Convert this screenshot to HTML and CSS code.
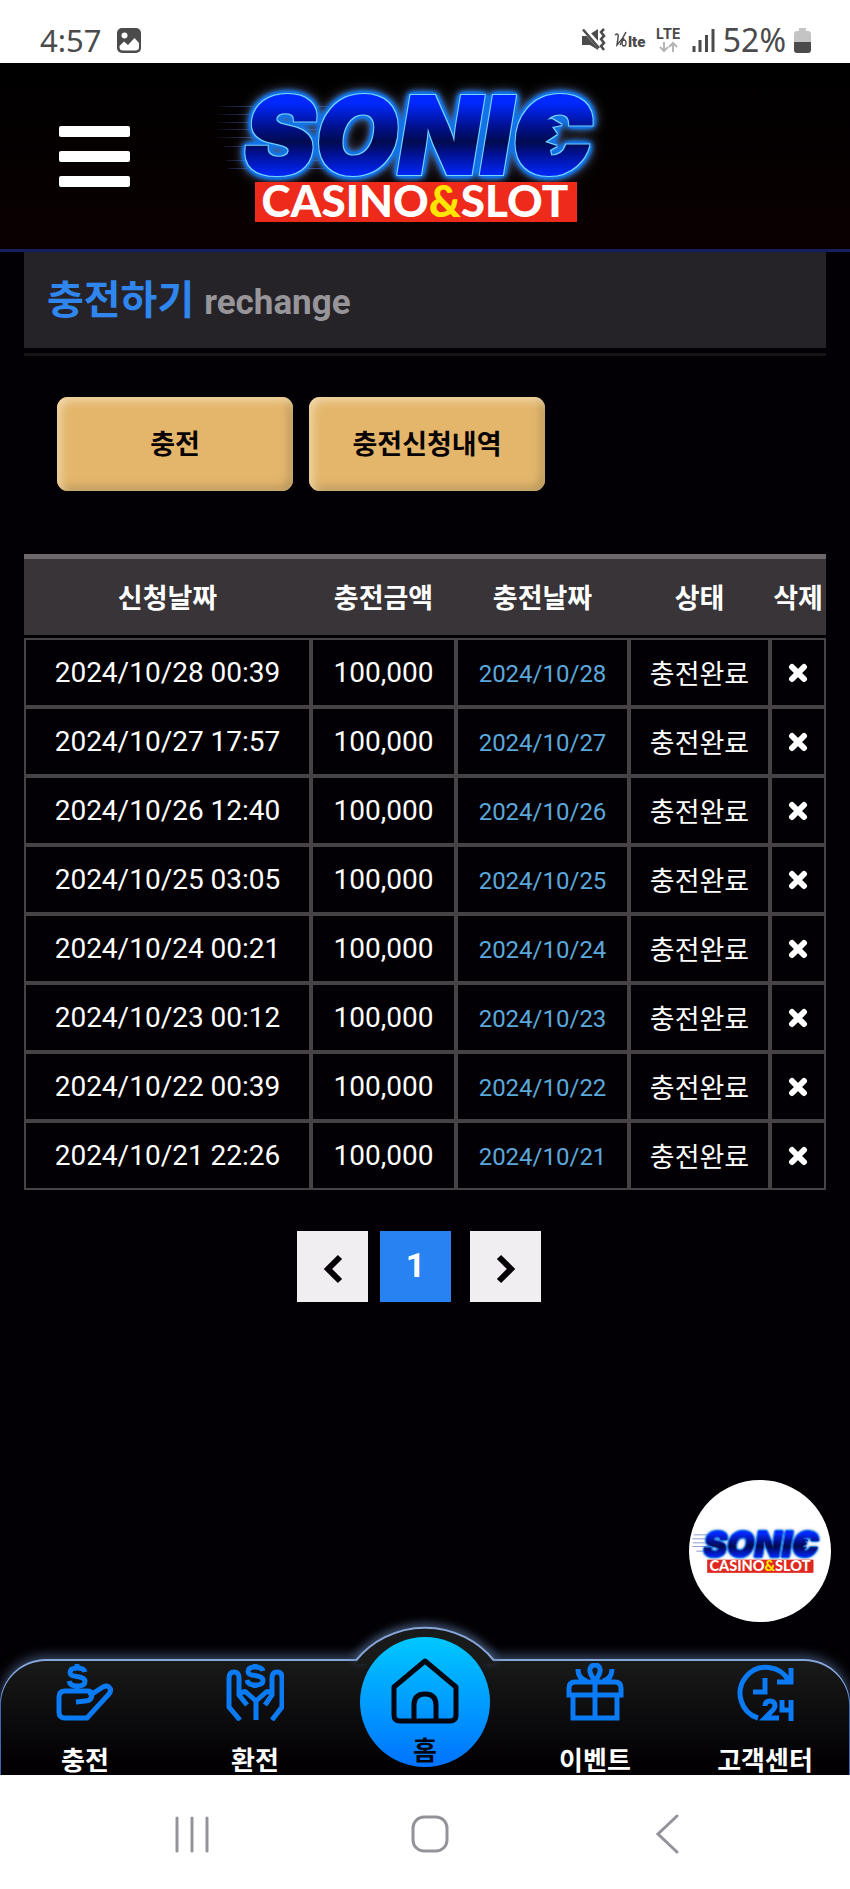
FILE: index.html
```html
<!DOCTYPE html>
<html lang="ko">
<head>
<meta charset="utf-8">
<meta name="viewport" content="width=device-width, initial-scale=1">
<title>충전하기</title>
<link rel="stylesheet" href="styles.css">
</head>
<body>
<div class="status">
  <span class="status-text">4:57</span>
  <svg class="status-photo" width="24" height="25" viewBox="0 0 24 25" aria-hidden="true"><rect width="24" height="25" rx="5" fill="#4b4b4b"/><circle cx="7.500" cy="7.500" r="3" fill="#fff"/><path d="M2.500 18 7 13.500l4 3.500 6.500-7 4.500 5v4q0 3.500-3.500 3.500H6q-3.500 0-3.500-3.500z" fill="#fff"/></svg>
  <div class="status-right">
    <svg width="24" height="24" viewBox="0 0 24 24" aria-hidden="true"><path d="M0 8h5L16 1v21L8 17H0z" fill="#4b4b4b"/><path d="M1 0 18 19" stroke="#fff" stroke-width="5"/><path d="M1 1.500 17 20" stroke="#4b4b4b" stroke-width="2.500"/><path d="M22 1l-3 3 3 4-3 3 3 4-3 3 3 4" fill="none" stroke="#4b4b4b" stroke-width="2.500"/></svg>
    <svg width="34" height="20" viewBox="0 0 34 20" aria-hidden="true"><path d="M1 5q4-3 3 3l-1 7Q9 9 12 2M10 8l-4 7" fill="none" stroke="#4b4b4b" stroke-width="1.500"/><ellipse cx="10" cy="13" rx="2" ry="3" fill="none" stroke="#4b4b4b" stroke-width="1.300"/><text x="14" y="17" class="volte">lte</text></svg>
    <svg width="27" height="30" viewBox="0 0 27 30" aria-hidden="true"><text x="0" y="14" class="lte">LTE</text><path d="M8 17v9M4 22l4 4 4-4M17 27v-9M13 22l4-4 4 4" fill="none" stroke="#b5b5b5" stroke-width="2"/></svg>
    <svg width="24" height="24" viewBox="0 0 24 24" aria-hidden="true"><path d="M3 18v6M9 12v12M15.500 7v17M22 1v23" stroke="#4b4b4b" stroke-width="3"/></svg>
    <span class="status-text status-percent">52%</span>
    <svg width="17" height="25" viewBox="0 0 17 25" aria-hidden="true"><path d="M5 0h7v3h2q3 0 3 3v8H0V6q0-3 3-3h2z" fill="#c4c4c4"/><path d="M0 14h17v8q0 3-3 3H3q-3 0-3-3z" fill="#4b4b4b"/></svg>
  </div>
</div>

<div class="app">
  <header class="header">
    <button class="menu" type="button" aria-label="메뉴"><span></span><span></span><span></span></button>
    <a class="brand" href="#" aria-label="SONIC CASINO&amp;SLOT">
      <svg class="logo" viewBox="0 0 450 170">
        <defs>
          <linearGradient id="ink" gradientUnits="userSpaceOnUse" x1="0" y1="28" x2="0" y2="106"><stop offset="0.05" stop-color="#0028ff"/><stop offset="0.35" stop-color="#001190"/><stop offset="0.55" stop-color="#000a50"/><stop offset="0.7" stop-color="#001190"/><stop offset="0.95" stop-color="#0024f0"/></linearGradient>
          <linearGradient id="trail" x1="0" x2="1"><stop offset="0" stop-color="#4a62b8" stop-opacity="0"/><stop offset="0.5" stop-color="#4a62b8"/><stop offset="1" stop-color="#2b50d0" stop-opacity="0.3"/></linearGradient>
          <filter id="neon" x="-10%" y="-40%" width="120%" height="180%" color-interpolation-filters="sRGB">
            <feMorphology in="SourceAlpha" operator="dilate" radius="1" result="a"/>
            <feFlood flood-color="#74d4ff"/><feComposite in2="a" operator="in" result="edge"/>
            <feGaussianBlur in="a" stdDeviation="3" result="b"/>
            <feComponentTransfer in="b" result="c"><feFuncA type="linear" slope="3"/></feComponentTransfer>
            <feFlood flood-color="#1272e6"/><feComposite in2="c" operator="in" result="rim"/>
            <feGaussianBlur in="a" stdDeviation="7" result="d"/>
            <feFlood flood-color="#8094c8"/><feComposite in2="d" operator="in" result="halo"/>
            <feMerge><feMergeNode in="halo"/><feMergeNode in="rim"/><feMergeNode in="edge"/><feMergeNode in="SourceGraphic"/></feMerge>
          </filter>
        </defs>
        <path fill="url(#trail)" d="M18 35h110v1H18zM14 43h120v1H14zM12 51h120v1H12zM16 58h120v1H16zM14 66h120v1H14zM24 75h120v1H24zM26 89h120v1H26zM28 97h120v1H28z"/>
        <g filter="url(#neon)">
          <path fill="url(#ink)" d="M336 50 352 48 362 54 352 56 357 63 345 71 357 75 350 79 352 88 334 86z"/>
          <text x="44" y="103" class="sonic">SONIC</text>
        </g>
        <rect x="55" y="111" width="322" height="40" fill="#ee2a1b"/>
        <text x="215" y="146" class="tagline">CASINO<tspan class="amp">&amp;</tspan>SLOT</text>
      </svg>
    </a>
  </header>

  <main class="main">
    <h1 class="title">충전하기 <small>rechange</small></h1>
    <div class="actions">
      <button type="button">충전</button>
      <button type="button">충전신청내역</button>
    </div>

    <table class="history">
      <colgroup><col class="c-req"><col class="c-amt"><col class="c-date"><col class="c-state"><col class="c-del"></colgroup>
      <thead><tr><th>신청날짜</th><th>충전금액</th><th>충전날짜</th><th>상태</th><th>삭제</th></tr></thead>
      <tbody>
        <tr><td>2024/10/28 00:39</td><td>100,000</td><td class="date">2024/10/28</td><td class="state">충전완료</td><td><button type="button" class="del" aria-label="삭제"><svg viewBox="0 0 20 20"><path d="M4 4l12 12M16 4 4 16"/></svg></button></td></tr>
        <tr><td>2024/10/27 17:57</td><td>100,000</td><td class="date">2024/10/27</td><td class="state">충전완료</td><td><button type="button" class="del" aria-label="삭제"><svg viewBox="0 0 20 20"><path d="M4 4l12 12M16 4 4 16"/></svg></button></td></tr>
        <tr><td>2024/10/26 12:40</td><td>100,000</td><td class="date">2024/10/26</td><td class="state">충전완료</td><td><button type="button" class="del" aria-label="삭제"><svg viewBox="0 0 20 20"><path d="M4 4l12 12M16 4 4 16"/></svg></button></td></tr>
        <tr><td>2024/10/25 03:05</td><td>100,000</td><td class="date">2024/10/25</td><td class="state">충전완료</td><td><button type="button" class="del" aria-label="삭제"><svg viewBox="0 0 20 20"><path d="M4 4l12 12M16 4 4 16"/></svg></button></td></tr>
        <tr><td>2024/10/24 00:21</td><td>100,000</td><td class="date">2024/10/24</td><td class="state">충전완료</td><td><button type="button" class="del" aria-label="삭제"><svg viewBox="0 0 20 20"><path d="M4 4l12 12M16 4 4 16"/></svg></button></td></tr>
        <tr><td>2024/10/23 00:12</td><td>100,000</td><td class="date">2024/10/23</td><td class="state">충전완료</td><td><button type="button" class="del" aria-label="삭제"><svg viewBox="0 0 20 20"><path d="M4 4l12 12M16 4 4 16"/></svg></button></td></tr>
        <tr><td>2024/10/22 00:39</td><td>100,000</td><td class="date">2024/10/22</td><td class="state">충전완료</td><td><button type="button" class="del" aria-label="삭제"><svg viewBox="0 0 20 20"><path d="M4 4l12 12M16 4 4 16"/></svg></button></td></tr>
        <tr><td>2024/10/21 22:26</td><td>100,000</td><td class="date">2024/10/21</td><td class="state">충전완료</td><td><button type="button" class="del" aria-label="삭제"><svg viewBox="0 0 20 20"><path d="M4 4l12 12M16 4 4 16"/></svg></button></td></tr>
      </tbody>
    </table>

    <nav class="pages" aria-label="페이지">
      <a href="#" aria-label="이전"><svg viewBox="0 0 20 30"><path d="M17 3 5 15l12 12"/></svg></a>
      <a href="#" class="current" aria-current="page">1</a>
      <a href="#" aria-label="다음"><svg viewBox="0 0 20 30"><path d="M3 3l12 12L3 27"/></svg></a>
    </nav>
  </main>

  <a class="float" href="#" aria-label="SONIC CASINO&amp;SLOT">
    <svg viewBox="0 0 430 170">
      <path fill="#6d7fc0" d="M14 35h90v2H14zM10 47h90v2H10zM12 59h90v2H12zM10 70h90v2H10zM22 84h60v2H22z"/>
      <g filter="url(#neon)">
        <path fill="url(#ink)" d="M336 50 352 48 362 54 352 56 357 63 345 71 357 75 350 79 352 88 334 86z"/>
        <text x="44" y="103" class="sonic">SONIC</text>
      </g>
      <rect x="55" y="111" width="322" height="40" fill="#e0281e"/>
      <text x="215" y="146" class="tagline">CASINO<tspan class="amp">&amp;</tspan>SLOT</text>
    </svg>
  </a>

  <nav class="tabs" aria-label="메뉴">
    <svg class="bump" viewBox="0 0 170 50" aria-hidden="true">
      <path class="bump-glow" d="M17 42A89 89 0 0 1 153 42"/>
      <path d="M16 46V42A89 89 0 0 1 154 42V46z" fill="#191a1a"/>
      <path class="bump-line" d="M16 42.500A89 89 0 0 1 154 42.500"/>
    </svg>
    <a href="#"><svg class="ico" viewBox="0 0 58 58"><path d="M21 28v-4M9 28h22q5 0 5 3 0 7-7 7l-9 1M33 33l14-9q4-2 6 0 3 3 0 7L31 55H9q-6 0-6-6V34q0-6 6-6"/><path class="coin" d="M29 9Q28 5 21 5 14 5 14 9.500q0 3.500 7 4 8 1 8 5 0 4.500-8 4.500-7 0-8-5M21 1v4"/></svg><span>충전</span></a>
    <a href="#"><svg class="ico" viewBox="0 0 58 58"><path d="M14 57 3 44V15q0-6 5-6t5 6v17l8 10M13 31l4-2q2-1 4 1l9 8V57M30 38l9-8q2-2 4-1l4 2M46 57l10-13V15q0-6-5-6t-5 6v17l-7 10"/><path class="coin" d="M37 8q-1-4-8-4-7 0-7 4.500 0 3.500 7 4 8 1 8 5 0 4.500-8 4.500-7 0-8-5M29 1v3M29 22v3"/></svg><span>환전</span></a>
    <a href="#" class="home"><svg viewBox="0 0 68 66"><path d="M3 29 34 3l31 26v28q0 6-6 6H9q-6 0-6-6zM23 63V47q0-11 11-11t11 11v16"/></svg><span>홈</span></a>
    <a href="#"><svg class="ico" viewBox="0 0 58 58"><path d="M3 32v-7q0-6 6-6h40q6 0 6 6v7zM7 34v21h44V34M29 19v36M29 18q-6-8-5-12 1-4 5-4t5 4q1 4-5 12M12 6q0 10 9 12M46 6q0 10-9 12"/></svg><span>이벤트</span></a>
    <a href="#"><svg class="ico" viewBox="0 0 58 58"><path d="M22 55A26 26 0 1 1 53 18M55 5v14H41M29 15v14H17"/><path d="M29 43q0-5 5-5t5 5q0 2-4 6l-6 6h14M46 37v10h9M55 37v21"/></svg><span>고객센터</span></a>
  </nav>
</div>

<div class="system">
  <button type="button" aria-label="최근 앱"><svg viewBox="0 0 38 40"><path d="M4 4v33M19 4v33M34 4v33"/></svg></button>
  <button type="button" aria-label="홈"><svg viewBox="0 0 38 40"><rect x="2" y="3" width="34" height="34" rx="11"/></svg></button>
  <button type="button" aria-label="뒤로"><svg viewBox="0 0 38 40"><path d="M28 2 9 20l19 18"/></svg></button>
</div>
</body>
</html>
```

FILE: styles.css
```css
* { box-sizing: border-box; }
body {
  margin: 0;
  min-height: 100vh;
  display: flex;
  flex-direction: column;
  background: #fff;
  color: #fff;
  font-family: Roboto, "Noto Sans CJK KR", sans-serif;
}
button { font: inherit; color: inherit; border: 0; padding: 0; background: none; }
a { color: inherit; text-decoration: none; }
svg { display: block; }

/* phone status bar */
.status {
  display: flex;
  align-items: center;
  height: 63px;
  padding: 17px 39px 0 40px;
  color: #4b4b4b;
}
.status-text { font: 31px/40px "Noto Sans", sans-serif; }
.status-percent { font-size: 32px; }
.status-photo { margin-left: 15px; }
.status-right { margin-left: auto; display: flex; align-items: center; gap: 8px; }
.volte { font: 900 15px Roboto, sans-serif; fill: #4b4b4b; }
.lte { font: 700 14px Inter, sans-serif; fill: #4b4b4b; }

.app {
  position: relative;
  flex: 1;
  display: flex;
  flex-direction: column;
  overflow: hidden;
  background: #020004;
}

/* header */
.header {
  display: grid;
  grid-template-columns: 1fr auto 1fr;
  align-items: center;
  height: 189px;
  border-bottom: 3px solid #14205e;
  background: linear-gradient(#000, #0a0001);
}
.menu { display: grid; gap: 14px; width: 71px; margin-left: 59px; }
.menu span { height: 11px; border-radius: 2px; background: #fff; }
.logo { width: 450px; overflow: visible; }
.sonic {
  font: italic 900 107px Inter, sans-serif;
  fill: url(#ink);
  stroke: url(#ink);
  stroke-width: 2px;
}
.tagline {
  font: 900 44px Lato, sans-serif;
  fill: #fff;
  text-anchor: middle;
}
.amp { fill: #ffe600; }

/* content */
.main { flex: 1; padding: 0 24px; }
.title {
  position: relative;
  margin: 0 0 49px;
  padding: 19px 23px 0;
  height: 96px;
  background: #252327;
  color: #2e86ee;
  font-weight: 700;
  font-size: 40px;
  line-height: 60px;
}
.title::after {
  content: "";
  position: absolute;
  left: 0;
  right: 0;
  bottom: -8px;
  height: 3px;
  background: #161417;
}
.title small { color: #98959a; font-size: 35px; font-weight: 700; }
.actions { display: flex; gap: 16px; padding: 0 33px; margin-bottom: 63px; }
.actions button {
  width: 236px;
  height: 94px;
  padding-bottom: 4px;
  border-radius: 11px;
  background: #e3b66c;
  box-shadow: inset 4px 4px 8px #f0d6a8, inset -4px -4px 8px #b8965c;
  color: #080204;
  font-size: 27px;
  font-weight: 700;
}

.history {
  width: 100%;
  table-layout: fixed;
  border-collapse: separate;
  border-spacing: 0;
  text-align: center;
  font-size: 28px;
}
.c-req { width: 287px; }
.c-amt { width: 145px; }
.c-date { width: 173px; }
.c-state { width: 141px; }
.c-del { width: 56px; }
.history th {
  height: 84px;
  padding: 4px 0 0;
  border-top: 5px solid #6b676b;
  border-bottom: 3px solid #020004;
  background: #383438;
  font-size: 27px;
  line-height: 40px;
  font-weight: 700;
  white-space: nowrap;
}
.history td {
  height: 69px;
  padding: 0;
  border: 2px solid #464246;
  line-height: 40px;
  white-space: nowrap;
}
.history .date { color: #5ba8dc; font-size: 24px; padding-top: 2px; }
.history .state { font-size: 27px; padding-top: 4px; }
.del { display: block; margin: 0 auto; }
.del svg { width: 20px; height: 20px; stroke: #fff; stroke-width: 6; stroke-linecap: round; }

.pages { display: flex; justify-content: center; gap: 12px; margin-top: 41px; padding-right: 12px; }
.pages a {
  display: grid;
  place-items: center;
  width: 71px;
  height: 71px;
  background: #f1eef2;
}
.pages .current { background: #2882f2; margin-right: 7px; padding-bottom: 4px; font-size: 34px; font-weight: 700; }
.pages svg { width: 20px; height: 30px; margin-top: 4px; fill: none; stroke: #050005; stroke-width: 6; }

.float {
  position: absolute;
  right: 19px;
  bottom: 153px;
  display: grid;
  place-items: center;
  width: 142px;
  height: 142px;
  border-radius: 50%;
  background: #fff;
}
.float svg { width: 142px; }

/* tab bar */
.tabs {
  position: relative;
  display: grid;
  grid-template-columns: repeat(5, 1fr);
  height: 116px;
  border-radius: 46px 46px 0 0;
  background: linear-gradient(#191a1a, #020003 90%);
  box-shadow: 0 -3px 12px #3c4c68, inset 0 2px 0 #86a5d8, inset 1px 0 0 #3a68b4, inset -1px 0 0 #3a68b4;
}
.bump { position: absolute; left: 50%; top: -41px; width: 170px; margin-left: -85px; overflow: visible; fill: none; }
.bump-line { stroke: #86a5d8; stroke-width: 2; }
.bump-glow { stroke: #50688f; stroke-width: 8; filter: blur(5px); }
.tabs a {
  position: relative;
  display: flex;
  flex-direction: column;
  align-items: center;
  justify-content: space-between;
  padding-top: 4px;
  font-size: 26px;
  font-weight: 700;
  line-height: 28px;
}
.ico { width: 58px; height: 58px; fill: none; stroke: #0b7af5; stroke-width: 5; }
.tabs .home {
  justify-self: center;
  justify-content: flex-start;
  width: 130px;
  height: 130px;
  margin-top: -22px;
  padding-top: 21px;
  border-radius: 50%;
  background: linear-gradient(#00c8ff, #0072ff);
  color: #030610;
}
.home svg { width: 68px; height: 66px; margin-bottom: 13px; fill: none; stroke: #030610; stroke-width: 5; stroke-linejoin: round; }

/* phone navigation bar */
.system {
  display: flex;
  justify-content: space-between;
  align-items: center;
  height: 114px;
  padding: 0 163px 0 173px;
}
.system svg { width: 38px; height: 40px; margin-top: 3px; fill: none; stroke: #959399; stroke-width: 3; stroke-linecap: round; }
```
